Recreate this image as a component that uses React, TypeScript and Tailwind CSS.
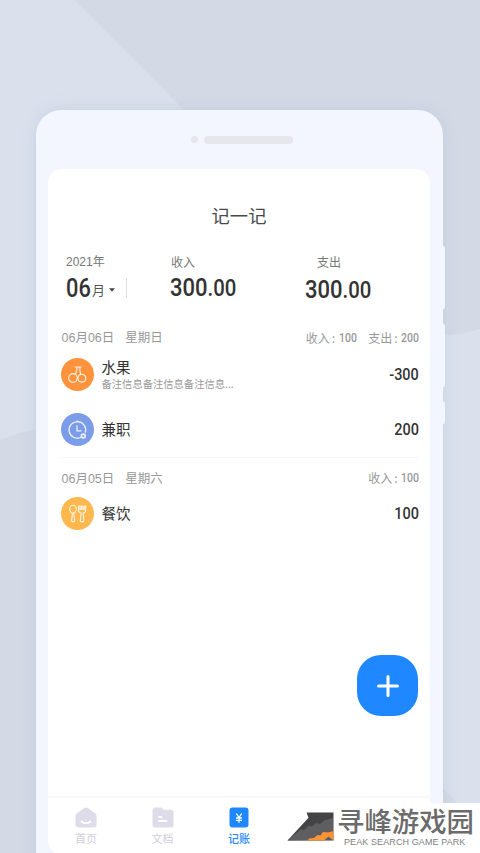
import type { ReactNode } from "react";
import clsx from "clsx";

type Entry = { name: string; note?: string; amount: string; color: string; icon: ReactNode };

const CherryIcon = () => (
  <svg viewBox="0 0 33 33" className="size-[33px]" fill="none" stroke="#fff" strokeOpacity=".85" strokeWidth="1.2" strokeLinecap="round">
    <circle cx="12" cy="20" r="4.3" />
    <circle cx="20.8" cy="20.2" r="3.9" />
    <path d="M14.2 9h6M16 9.200c.2 2.500-.2 4.500-1.600 6.400M18.800 9.200c-.2 2.500 0 5 1 7" />
  </svg>
);

const ClockIcon = () => (
  <svg viewBox="0 0 33 33" className="size-[33px]" fill="none" stroke="#fff" strokeOpacity=".85" strokeWidth="1.3" strokeLinecap="round">
    <path d="M24.300 19.300a8.300 8.300 0 1 0-4.600 5.200M15 9.100q1.300-2 2.600 0" />
    <path d="M16 13v4.800h4" />
    <circle cx="22.300" cy="23" r="1.900" strokeWidth="1.700" />
  </svg>
);

const CutleryIcon = () => (
  <svg viewBox="0 0 33 33" className="size-[33px]" fill="none" stroke="#fff" strokeOpacity=".85" strokeWidth="1.1" strokeLinejoin="round">
    <ellipse cx="12" cy="12.100" rx="3.300" ry="3.900" />
    <path d="M11.300 16.100v2l-.8 5.800q1.600 2 3.200 0l-.8-5.800v-2" />
    <path d="M17.500 9v4.200q.2 2.500 2.600 2.800l-.8 8q1.700 1.500 3.600 0l-.8-8q2.400-.3 2.600-2.800V9h-1.500v3.500h-1.300V9h-1.500v3.500H19V9z" />
  </svg>
);

const DAYS: { date: string; weekday: string; income: string; expense?: string; entries: Entry[] }[] = [
  {
    date: "06月06日",
    weekday: "星期日",
    income: "100",
    expense: "200",
    entries: [
      { name: "水果", note: "备注信息备注信息备注信息...", amount: "-300", color: "bg-[#fe933b]", icon: <CherryIcon /> },
      { name: "兼职", amount: "200", color: "bg-[#7b9de9]", icon: <ClockIcon /> },
    ],
  },
  {
    date: "06月05日",
    weekday: "星期六",
    income: "100",
    entries: [{ name: "餐饮", amount: "100", color: "bg-[#ffb84d]", icon: <CutleryIcon /> }],
  },
];

function Total({ value, className }: { value: string; className?: string }) {
  const [whole, cents] = value.split(".");
  return (
    <span className={clsx("inline-block origin-left scale-x-[0.83] font-['Roboto'] text-[26.500px] leading-7 font-medium whitespace-nowrap text-[#333]", className)}>
      {whole}
      <span className="text-[24.500px]">.{cents}</span>
    </span>
  );
}

function Sum({ label, value }: { label: string; value: string }) {
  return (
    <span className="flex items-center">
      <span>{label}</span>
      <span className="ml-[2px] w-[7px]">:</span>
      <span className="-mr-[4px] origin-left scale-x-[0.84] font-['Roboto'] text-[12.500px] font-medium">{value}</span>
    </span>
  );
}

function EntryRow({ entry }: { entry: Entry }) {
  return (
    <div className="flex h-[33px] items-center">
      <div className={clsx("size-[33px] shrink-0 rounded-full", entry.color)}>{entry.icon}</div>
      <div className="ml-2 flex-1">
        <div className={clsx("text-[14.500px] leading-[18px] text-[#333]", !entry.note && "-mt-[2px]")}>{entry.name}</div>
        {entry.note && <div className="text-[10.300px] leading-4 whitespace-nowrap text-[#999]">{entry.note}</div>}
      </div>
      <span className="-mr-px origin-right scale-x-[0.85] pt-px font-['Roboto'] text-[17px] font-medium text-[#333]">{entry.amount}</span>
    </div>
  );
}

const Backdrop = () => (
  <svg viewBox="0 0 480 853" className="absolute inset-0 h-[853px] w-[480px]">
    <path d="M74 0H480V329Q462 335 440 335H409Z" fill="#d3dae5" />
    <path d="M0 440Q18 432 40 429L440 786L508 853H0Z" fill="#d3dae5" />
  </svg>
);

function TabBar() {
  return (
    <nav className="flex h-[58px] border-t border-[#f8f8f8] pt-[9px] text-[11px] leading-[14px] text-[#d0cedb] shadow-[0_-1px_3px_rgba(0,0,0,0.04)]">
      <div className="flex w-[76px] flex-col items-center gap-[3px]">
        <svg viewBox="0 0 22 21" className="h-[21px] w-[22px]">
          <path d="M9 1.200q2-1.400 4 0l7 5Q21.500 7.500 21.500 9v8.500q0 3-3 3h-15q-3 0-3-3V9q0-1.500 1.500-2.800z" fill="#dddce8" />
          <path d="M6.500 14.500q4.500 3.500 9 0" stroke="#fff" strokeWidth="1.800" strokeLinecap="round" fill="none" />
        </svg>
        首页
      </div>
      <div className="flex w-[77px] flex-col items-center gap-[3px]">
        <svg viewBox="0 0 22 21" className="h-[21px] w-[22px]">
          <path d="M.5 3q0-2.500 2.500-2.500h5.500q1.200 0 2 1l1.200 1.300H19q2.500 0 2.500 2.500v12.700q0 2.500-2.500 2.500H3Q.5 20.500.5 18z" fill="#dddce8" />
          <path d="M7 10h2.500M7 14h7.500" stroke="#fff" strokeWidth="1.800" strokeLinecap="round" />
        </svg>
        文档
      </div>
      <div className="flex w-[76px] flex-col items-center gap-[3px] font-medium text-[#1f87ff]">
        <svg viewBox="0 0 20 21" className="h-[21px] w-5">
          <rect x=".5" y=".5" width="19" height="20" rx="3" fill="#1f87ff" />
          <path d="m7.300 6.500 2.700 4 2.700-4M10 10.500v5.300M7 11h6M7 13.300h6" stroke="#fff" strokeWidth="1.300" fill="none" />
        </svg>
        记账
      </div>
    </nav>
  );
}

function Watermark() {
  return (
    <div className="absolute top-[803px] left-[285px] flex h-[50px] w-[195px] bg-white pl-[2px]">
      <svg viewBox="0 0 48 30" className="mt-[9px] h-[30px] w-12 shrink-0">
        <path d="M19.500.5H46.500V28.500H.5L21.500 5.800Z" fill="#444446" />
        <path d="M.5 28.500 14 17l3 1 5-4.500 3 1 4-3.500 4 1 5-4 3-.5 5-2v22.500Z" fill="#5e5e60" />
        <path d="M20.500 28.500l1.500-2 5-.5 3.500-3 3 .5 2.500-3.500 5 .500 5.500-1.500v9.500l-5-4-4.500 4Z" fill="#ff9233" />
      </svg>
      <div className="flex w-[140px] flex-col items-start">
        <div className="ml-[2px] text-[27.400px] leading-[34px] font-medium whitespace-nowrap text-[#6b6b6b]">寻峰游戏园</div>
        <div className="ml-[9px] font-['Liberation_Sans'] text-[9px] leading-[11px] tracking-[0.1px] whitespace-nowrap text-[#808080]">PEAK SEARCH GAME PARK</div>
      </div>
    </div>
  );
}

export default function App() {
  return (
    <div className="relative h-[853px] w-[480px] overflow-hidden bg-[#dae1ec] font-['Noto_Sans_CJK_SC',sans-serif]">
      <Backdrop />

      {/* Phone shell */}
      <div className="relative mt-[110px] ml-[35.500px] h-[780px] w-[407px] rounded-[25px] bg-[#f3f6ff] shadow-[0_0_16px_rgba(160,182,208,0.35)]">
        {/* Side keys */}
        <div className="absolute top-[135px] -right-[2px] h-[65px] w-1 rounded-r bg-[#f3f6ff]" />
        <div className="absolute top-[213px] -right-[2px] h-[65px] w-1 rounded-r bg-[#f3f6ff]" />
        <div className="absolute top-[291px] -right-[2px] h-[24px] w-1 rounded-r bg-[#f3f6ff]" />

        <div className="flex h-[59px] items-center gap-[6px] pl-[155px]">
          <span className="size-[7.500px] rounded-full bg-[#e7e6ec]" />
          <span className="h-2 w-[89px] rounded-full bg-[#e7e6ec]" />
        </div>

        <main className="relative ml-[12.500px] flex h-[686px] w-[382px] flex-col overflow-hidden rounded-[14px] bg-white">
          <h1 className="pt-[33px] text-center text-[18.300px] leading-[26px] text-[#4a4a4a]">记一记</h1>

          <section className="mt-[24px] flex h-[56px] text-[12px] leading-5 text-[#777]">
            <div className="w-[104px] pl-[18px]">
              <div className="font-['Liberation_Sans','Noto_Sans_CJK_SC',sans-serif]">2021年</div>
              <div className="flex h-8 items-center">
                <span className="w-[26px] origin-left scale-x-[0.84] font-['Roboto'] text-[26px] font-medium text-[#333]">06</span>
                <span className="pt-1 text-[13px] text-[#555]">月</span>
                <svg viewBox="0 0 6 4" className="mt-1 ml-1 h-1 w-[6px]">
                  <path d="M0 .3h6L3 3.700z" fill="#444" />
                </svg>
                <span className="ml-[11px] h-5 w-px shrink-0 bg-[#ddd]" />
              </div>
            </div>
            <div className="w-[153px] pl-[18px]">
              <div className="pl-px">收入</div>
              <Total value="300.00" className="mt-px" />
            </div>
            <div>
              <div className="pl-[12px]">支出</div>
              <Total value="300.00" className="mt-[3px]" />
            </div>
          </section>

          {DAYS.map((day, i) => (
            <section key={day.date} className={clsx("mx-[12.500px]", i === 0 ? "mt-[20px]" : "mt-[11px] border-t border-[#f6f6f6] pt-[11px]")}>
              <div className={clsx("flex h-5 items-center justify-between text-[12px] text-[#999]", i === 0 ? "mb-[10px]" : "mb-[8px]")}>
                <div className="flex gap-[11px] pl-px font-['Liberation_Sans','Noto_Sans_CJK_SC',sans-serif] text-[12.500px]">
                  <span>{day.date}</span>
                  <span>{day.weekday}</span>
                </div>
                <div className={clsx("-mr-px flex gap-[12px]", i > 0 && "pb-[2px]")}>
                  <Sum label="收入" value={day.income} />
                  {day.expense && <Sum label="支出" value={day.expense} />}
                </div>
              </div>
              <div className="flex flex-col gap-[22px]">
                {day.entries.map((entry) => (
                  <EntryRow key={entry.name} entry={entry} />
                ))}
              </div>
            </section>
          ))}

          <button className="absolute top-[486px] right-[12px] flex size-[61px] items-center justify-center rounded-[24px] bg-[#1f87ff]">
            <svg viewBox="0 0 22 22" className="size-[22px]" stroke="#fff" strokeWidth="3" strokeLinecap="round">
              <path d="M11 1.500v19M1.500 11h19" />
            </svg>
          </button>

          <div className="mt-auto">
            <TabBar />
          </div>
        </main>
      </div>

      <Watermark />
    </div>
  );
}
